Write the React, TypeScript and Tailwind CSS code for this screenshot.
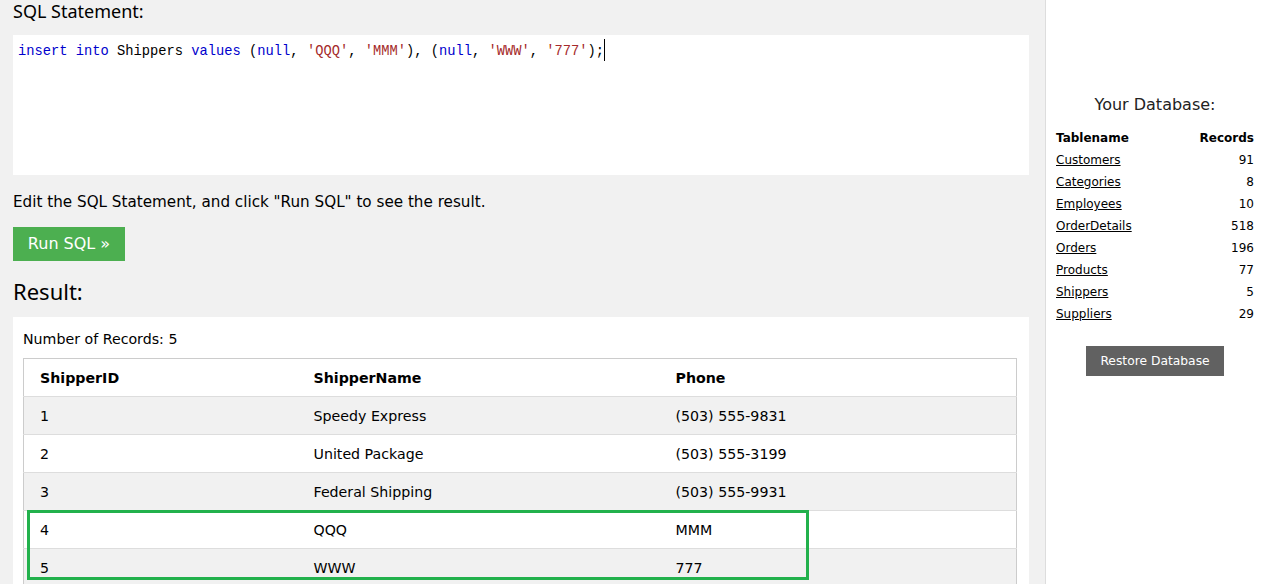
import React from 'react';

const kw = 'text-[#0000cd]';
const str = 'text-[#a52a2a]';

const shippers = [
    { id: 1, name: 'Speedy Express', phone: '(503) 555-9831' },
    { id: 2, name: 'United Package', phone: '(503) 555-3199' },
    { id: 3, name: 'Federal Shipping', phone: '(503) 555-9931' },
    { id: 4, name: 'QQQ', phone: 'MMM' },
    { id: 5, name: 'WWW', phone: '777' },
];

const dbTables = [
    { name: 'Customers', count: 91 },
    { name: 'Categories', count: 8 },
    { name: 'Employees', count: 10 },
    { name: 'OrderDetails', count: 518 },
    { name: 'Orders', count: 196 },
    { name: 'Products', count: 77 },
    { name: 'Shippers', count: 5 },
    { name: 'Suppliers', count: 29 },
];

const body = "font-['DejaVu_Sans',Verdana,sans-serif]";
const heading = "font-['Noto_Sans','Open_Sans',sans-serif]";

export default function App() {
    return (
        <div className={`flex min-h-[584px] ${body} text-black`}>
            {/* Editor + result */}
            <div className="w-[1045px] shrink-0 bg-[#f1f1f1] pl-[13px] pr-[16px]">
                <h2 className={`${heading} text-[18px] leading-[26px] -mt-[2px] h-[37px] font-normal`}>SQL Statement:</h2>

                <div className="bg-white h-[140px] px-[5px] pt-[6px]">
                    <div className="font-['Liberation_Mono',monospace] text-[13.75px] leading-[20px] whitespace-pre">
                        <span className={kw}>insert</span> <span className={kw}>into</span> Shippers <span className={kw}>values</span> (<span className={kw}>null</span>, <span className={str}>'QQQ'</span>, <span className={str}>'MMM'</span>), (<span className={kw}>null</span>, <span className={str}>'WWW'</span>, <span className={str}>'777'</span>);<span className="inline-block w-px h-[22px] bg-black align-middle -mt-[2px]" />
                    </div>
                </div>

                <p className="text-[15.2px] leading-[20px] mt-[17px]">Edit the SQL Statement, and click "Run SQL" to see the result.</p>

                <button className="mt-[15px] h-[34px] w-[112px] bg-[#4caf50] text-white text-[16px] flex items-center justify-center">
                    Run SQL »
                </button>

                <h2 className={`${heading} text-[22px] leading-[26px] mt-[17px] font-normal`}>Result:</h2>

                <div className="bg-white mt-[13px] px-[10px] pt-[12px] pb-[20px]">
                    <div className="text-[14.2px] leading-[20px]">Number of Records: 5</div>
                    <div className="relative mt-[9px]">
                        <table className="w-[994px] border-collapse border border-[#cccccc] text-[14.2px]">
                            <thead>
                                <tr className="h-[38px] bg-white text-left">
                                    <th className="w-[274px] pl-[16px] pt-[2px] font-bold">ShipperID</th>
                                    <th className="w-[362px] pl-[16px] pt-[2px] font-bold">ShipperName</th>
                                    <th className="pl-[16px] pt-[2px] font-bold">Phone</th>
                                </tr>
                            </thead>
                            <tbody>
                                {shippers.map((s, i) => (
                                    <tr key={s.id} className={`h-[38px] border-t border-[#dddddd] ${i % 2 === 0 ? 'bg-[#f1f1f1]' : 'bg-white'}`}>
                                        <td className="pl-[16px] pt-[2px]">{s.id}</td>
                                        <td className="pl-[16px] pt-[2px]">{s.name}</td>
                                        <td className="pl-[16px] pt-[2px]">{s.phone}</td>
                                    </tr>
                                ))}
                            </tbody>
                        </table>
                        {/* highlight around the inserted rows */}
                        <div className="absolute left-[4px] top-[152px] w-[782px] h-[70px] border-[3px] border-[#22b14c] pointer-events-none" />
                    </div>
                </div>
            </div>

            {/* Sidebar */}
            <div className="flex-1 bg-white border-l border-[#dddddd] px-[10px] pt-[94px]">
                <h3 className="text-center text-[16px] leading-[22px] text-[#222]">Your Database:</h3>
                <table className="w-full mt-[11px] text-[12px]">
                    <thead>
                        <tr className="h-[22px]">
                            <th className="text-left font-bold">Tablename</th>
                            <th className="text-right font-bold">Records</th>
                        </tr>
                    </thead>
                    <tbody>
                        {dbTables.map((t) => (
                            <tr key={t.name} className="h-[22px]">
                                <td><a href="#" className="underline text-black">{t.name}</a></td>
                                <td className="text-right">{t.count}</td>
                            </tr>
                        ))}
                    </tbody>
                </table>
                <div className="flex justify-center mt-[21px]">
                    <button className="h-[30px] w-[138px] bg-[#616161] text-white text-[12.3px]">Restore Database</button>
                </div>
            </div>
        </div>
    );
}
